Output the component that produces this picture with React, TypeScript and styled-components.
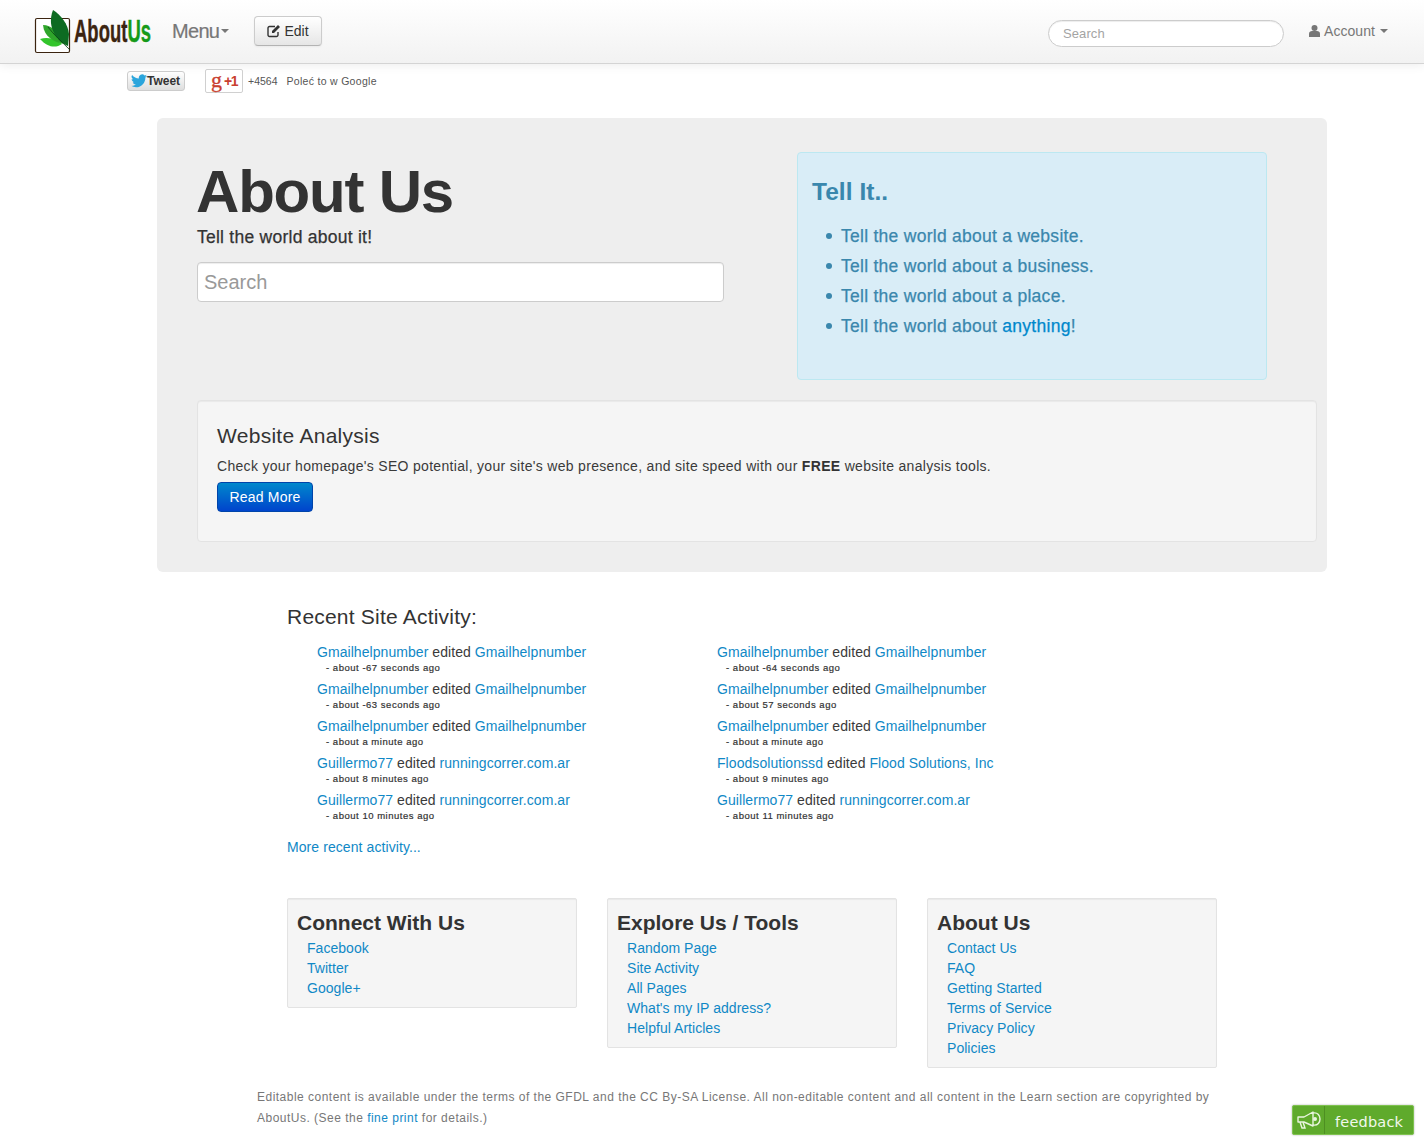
import React from "react";
import styled, { createGlobalStyle } from "styled-components";

const Global = createGlobalStyle`
  html, body { margin: 0; padding: 0; background: #fff; }
  body { font-family: "Liberation Sans", Arial, sans-serif; font-size: 14px; line-height: 20px; color: #3a3a3a; letter-spacing: .06px; }
  * { box-sizing: border-box; }
  a { color: #1088c6; text-decoration: none; }
`;

const Page = styled.div`width: 1424px; height: 1148px; position: relative; overflow: hidden;`;

const NavBar = styled.header`
  height: 64px; display: flex; align-items: flex-start;
  background: linear-gradient(#ffffff, #f2f2f2);
  border-bottom: 1px solid #d4d4d4;
  box-shadow: 0 1px 10px rgba(0,0,0,.08);
  padding-left: 34px;
`;
const LogoWrap = styled.a`display: block; width: 120px; height: 46px; margin-top: 8px;`;
const MenuLink = styled.a`
  margin: 18px 0 0 18px; font-size: 20px; line-height: 26px; color: #777; letter-spacing: -.7px;
  -webkit-text-stroke: .2px #777;
  display: flex; align-items: center; gap: 2px; width: 58px;
`;
const Caret = styled.span`
  display: inline-block; width: 0; height: 0;
  border-left: 4px solid transparent; border-right: 4px solid transparent; border-top: 4px solid #777;
`;
const AccountCaret = styled(Caret)`margin-left: 1px;`;
const EditButton = styled.button`
  margin: 16px 0 0 24px; width: 68px; height: 30px;
  font: 14px/20px "Liberation Sans", Arial, sans-serif; letter-spacing: 0; color: #333;
  background: linear-gradient(#ffffff, #e6e6e6);
  border: 1px solid #ccc; border-bottom-color: #b3b3b3; border-radius: 4px;
  box-shadow: inset 0 1px 0 rgba(255,255,255,.2), 0 1px 2px rgba(0,0,0,.05);
  display: flex; align-items: center; justify-content: center; gap: 3px; padding: 0;
`;
const NavSearch = styled.input`
  margin: 20px 0 0 726px; width: 236px; height: 27px; padding: 4px 14px;
  font: 13px/18px "Liberation Sans", Arial, sans-serif; letter-spacing: .1px;
  border: 1px solid #ccc; border-radius: 14px; background: #fff; outline: none;
  box-shadow: inset 0 1px 1px rgba(0,0,0,.075);
  &::placeholder { color: #a4a4a4; opacity: 1; }
`;
const AccountLink = styled.a`
  margin: 21px 0 0 25px; color: #777; font-size: 14px; line-height: 20px; letter-spacing: .06px;
  display: flex; align-items: center; gap: 4px;
`;

const SocialRow = styled.div`height: 54px; display: flex; align-items: flex-start; padding: 5px 0 0 127px;`;
const TweetBtn = styled.a`
  margin-top: 2px; width: 58px; height: 20px; border: 1px solid #ccc; border-radius: 3px;
  background: linear-gradient(#fff, #dedede); color: #333;
  font: bold 12px/18px "Liberation Sans", Arial, sans-serif; letter-spacing: 0;
  display: flex; align-items: center; padding-left: 3px; gap: 0;
`;
const PlusOne = styled.a`
  margin-left: 20px; width: 38px; height: 24px; border: 1px solid #d0d0d0; border-radius: 2px; background: #fff;
  display: flex; align-items: center; justify-content: center; gap: 2px; color: #c9402f; padding-bottom: 3px;
  font-family: "Liberation Serif", serif; font-size: 22px; font-weight: normal; letter-spacing: 0;
  -webkit-text-stroke: .3px #c9402f;
`;
const PlusText = styled.span`font: bold 14px/20px "Liberation Sans", Arial, sans-serif; letter-spacing: -1.5px; margin-top: 3px; -webkit-text-stroke: 0;`;
const SocialNote = styled.span`font-size: 10.5px; line-height: 24px; color: #555; letter-spacing: ${p => p.$ls}px; margin-left: ${p => p.$gap}px;`;

const Hero = styled.section`
  margin-left: 157px; width: 1170px; height: 454px; background: #eeeeee; border-radius: 6px;
  padding: 34px 10px 30px 40px;
`;
const HeroTop = styled.div`display: flex; align-items: flex-start; height: 249px; margin-bottom: -1px;`;
const HeroLeft = styled.div`width: 600px;`;
const HeroTitle = styled.h1`margin: 10px 0 0 -1px; font-size: 60px; line-height: 60px; font-weight: bold; color: #333; letter-spacing: -1.2px;`;
const HeroSub = styled.p`margin: 5px 0 0; font-size: 17.5px; line-height: 20px; color: #333; letter-spacing: .25px; -webkit-text-stroke: .25px #333;`;
const HeroSearch = styled.input`
  display: block; margin-top: 15px; width: 527px; height: 40px; padding: 4px 6px;
  font: 20px/30px "Liberation Sans", Arial, sans-serif; letter-spacing: 0;
  border: 1px solid #ccc; border-radius: 4px; background: #fff; outline: none;
  box-shadow: inset 0 1px 1px rgba(0,0,0,.075);
  &::placeholder { color: #999; opacity: 1; }
`;
const InfoBox = styled.div`
  width: 470px; height: 228px; background: #d9edf7; border: 1px solid #bce8f1; border-radius: 4px;
  padding: 24px 14px; color: #3a87ad;
`;
const InfoTitle = styled.h3`margin: 0 0 14px; font-size: 24.5px; line-height: 30px; font-weight: bold; color: #3a87ad; letter-spacing: .05px;`;
const InfoList = styled.ul`list-style: none; margin: 0; padding: 0 0 0 14px;`;
const InfoItem = styled.li`
  display: flex; align-items: center; gap: 9px;
  font-size: 17.5px; line-height: 30px; letter-spacing: .27px; -webkit-text-stroke: .25px #3a87ad;
  white-space: pre;
  &::before { content: ""; width: 6px; height: 6px; border-radius: 50%; background: #3a87ad; flex: none; }
`;
const InfoLink = styled.a`color: #0088cc; -webkit-text-stroke: .25px #0088cc;`;
const Strong = styled.strong`font-weight: bold; color: #333;`;

const Well = styled.div`
  width: 1120px; height: 142px; background: #f5f5f5; border: 1px solid #e3e3e3; border-radius: 4px;
  padding: 19px; box-shadow: inset 0 1px 1px rgba(0,0,0,.05);
`;
const WellTitle = styled.h4`margin: 1px 0 0; font-size: 21px; line-height: 30px; font-weight: normal; color: #333; letter-spacing: .28px;`;
const WellText = styled.p`margin: 5px 0 0; font-size: 14px; line-height: 20px; letter-spacing: .31px;`;
const PrimaryButton = styled.a`
  display: block; margin-top: 6px; width: 96px; height: 30px; text-align: center;
  line-height: 28px; font-size: 14px; color: #fff; letter-spacing: .2px;
  background: linear-gradient(#0088cc, #0044cc); border: 1px solid #0044aa; border-radius: 4px;
`;

const Activity = styled.section`margin: 30px 0 0 287px; width: 800px;`;
const ActivityTitle = styled.h4`margin: 0; font-size: 21px; line-height: 30px; font-weight: normal; letter-spacing: .21px; color: #333;`;
const ActivityGrid = styled.div`display: grid; grid-template-columns: 400px 400px; margin-top: 10px; padding-left: 30px;`;
const ActivityItem = styled.div`height: 37px; font-size: 14px; line-height: 20px; letter-spacing: .06px;`;
const Ago = styled.div`font-size: 9.5px; line-height: 12px; padding-left: 9px; letter-spacing: .52px; color: #333; -webkit-text-stroke: .2px #333;`;
const MoreLink = styled.a`display: block; margin-top: 10px; font-size: 14px; line-height: 20px; letter-spacing: .08px;`;

const FooterCols = styled.section`display: flex; align-items: flex-start; gap: 30px; margin: 41px 0 0 287px;`;
const FooterCard = styled.div`
  width: 290px; background: #f5f5f5; border: 1px solid #e3e3e3; border-radius: 2px;
  padding: 9px; box-shadow: inset 0 1px 1px rgba(0,0,0,.05);
`;
const FooterTitle = styled.h3`margin: 0; font-size: 21px; line-height: 30px; font-weight: bold; color: #333; letter-spacing: 0;`;
const FooterLinks = styled.ul`list-style: none; margin: 0; padding: 0 0 0 10px;`;
const FooterLink = styled.li`line-height: 20px; font-size: 14px; letter-spacing: .04px;`;

const Legal = styled.p`
  margin: 19px 0 0 257px; width: 970px; font-size: 12px; line-height: 21px; color: #777; letter-spacing: .485px;
`;
const FeedbackTab = styled.a`
  position: absolute; left: 1292px; top: 1105px; width: 122px; height: 30px;
  background: #5faa2c; border-radius: 2px; border: 1px solid #7fc24f;
  box-shadow: 0 0 2px rgba(0,0,0,.35);
  display: flex; align-items: center; color: #fff;
  font: 14.5px/30px "DejaVu Sans", sans-serif; letter-spacing: .2px;
`;
const FeedbackIcon = styled.span`
  width: 32px; height: 28px; border-right: 1px solid #4e8f22; display: flex; align-items: center; justify-content: center;
`;
const FeedbackLabel = styled.span`margin: 3px 0 0 10px; color: #f2f8ec;`;

const Logo = () => (
  <svg width="120" height="46" viewBox="0 0 120 46" aria-hidden="true">
    <rect x="1.500" y="10.500" width="34" height="34" rx="1.500" fill="#fff" stroke="#3b2410" strokeWidth="1.200" />
    <path d="M6 31 C12 29 18 30 24 33 L28 36 C22 40 14 40 6 31Z" fill="#33c52c" />
    <path d="M9 17 C17 17 25 24 30 36 C20 34 10 29 9 17Z" fill="#2fa52b" />
    <path d="M19 2 C27 7 34 16 35 26 L34 38 C24 34 12 20 19 2Z" fill="#0d6b22" />
    <path d="M14 19 C20 27 27 33 36 42" fill="none" stroke="#063d13" strokeWidth=".8" />
    <text x="40" y="34" fontFamily="'Liberation Sans Narrow','Liberation Sans',sans-serif" fontWeight="bold" fontSize="32" textLength="77" lengthAdjust="spacingAndGlyphs" fill="#3b2410" stroke="#3b2410" strokeWidth=".4">
      About<tspan fill="#159a19" stroke="#159a19">Us</tspan>
    </text>
  </svg>
);
const EditIcon = () => (
  <svg width="14" height="14" viewBox="0 0 14 14" aria-hidden="true">
    <path d="M11 8v3a1.500 1.500 0 0 1-1.500 1.500h-7A1.500 1.500 0 0 1 1 11V4a1.500 1.500 0 0 1 1.500-1.500H8" fill="none" stroke="#333" strokeWidth="1.400" />
    <path d="M5 7l6-6 2 2-6 6H5V7Z" fill="#333" />
  </svg>
);
const UserIcon = () => (
  <svg width="11" height="12" viewBox="0 0 11 12" aria-hidden="true">
    <circle cx="5.500" cy="3" r="3" fill="#777" />
    <path d="M0 12V8.500C0 7 1.500 6 3 6h5c1.500 0 3 1 3 2.500V12Z" fill="#777" />
  </svg>
);
const Bird = () => (
  <svg width="16" height="14" viewBox="0 0 24 20" aria-hidden="true">
    <path d="M24 2.400c-.9.4-1.800.7-2.800.8 1-.6 1.800-1.600 2.200-2.700-1 .6-2 1-3.100 1.200A4.900 4.900 0 0 0 11.900 6.200 14 14 0 0 1 1.700.900a4.900 4.900 0 0 0 1.500 6.600c-.8 0-1.600-.2-2.200-.6 0 2.400 1.700 4.400 3.900 4.900-.7.200-1.500.2-2.200.1.600 2 2.400 3.400 4.600 3.400A9.900 9.900 0 0 1 0 17.300 14 14 0 0 0 7.500 19.500c9.100 0 14.300-7.700 14-14.600 1-.7 1.800-1.600 2.500-2.500Z" fill="#2ba5dc" />
  </svg>
);
const Megaphone = () => (
  <svg width="26" height="20" viewBox="0 0 26 20" aria-hidden="true" fill="none" stroke="#e9f5de" strokeWidth="1.400">
    <path d="M2 7h6l9-5v14l-9-4H2Z" strokeLinejoin="round" />
    <path d="M4 12l2 6h3l-2-6" />
    <path d="M17 3c5-1 7 3 7 6s-2 7-7 6" />
    <circle cx="19" cy="9" r="2" fill="#e9f5de" stroke="none" />
  </svg>
);

const activity = [
  ["Gmailhelpnumber", "Gmailhelpnumber", "about -67 seconds ago"],
  ["Gmailhelpnumber", "Gmailhelpnumber", "about -64 seconds ago"],
  ["Gmailhelpnumber", "Gmailhelpnumber", "about -63 seconds ago"],
  ["Gmailhelpnumber", "Gmailhelpnumber", "about 57 seconds ago"],
  ["Gmailhelpnumber", "Gmailhelpnumber", "about a minute ago"],
  ["Gmailhelpnumber", "Gmailhelpnumber", "about a minute ago"],
  ["Guillermo77", "runningcorrer.com.ar", "about 8 minutes ago"],
  ["Floodsolutionssd", "Flood Solutions, Inc", "about 9 minutes ago"],
  ["Guillermo77", "runningcorrer.com.ar", "about 10 minutes ago"],
  ["Guillermo77", "runningcorrer.com.ar", "about 11 minutes ago"],
];
const cards = [
  ["Connect With Us", ["Facebook", "Twitter", "Google+"]],
  ["Explore Us / Tools", ["Random Page", "Site Activity", "All Pages", "What's my IP address?", "Helpful Articles"]],
  ["About Us", ["Contact Us", "FAQ", "Getting Started", "Terms of Service", "Privacy Policy", "Policies"]],
] as const;

export default function App() {
  return (
    <Page>
      <Global />
      <NavBar>
        <LogoWrap href="#"><Logo /></LogoWrap>
        <MenuLink href="#">Menu<Caret /></MenuLink>
        <EditButton><EditIcon />Edit</EditButton>
        <NavSearch placeholder="Search" />
        <AccountLink href="#"><UserIcon />Account<AccountCaret /></AccountLink>
      </NavBar>
      <SocialRow>
        <TweetBtn href="#"><Bird />Tweet</TweetBtn>
        <PlusOne href="#">g<PlusText>+1</PlusText></PlusOne>
        <SocialNote $gap={5} $ls={0}>+4564</SocialNote>
        <SocialNote $gap={9} $ls={0.3}>Poleć to w Google</SocialNote>
      </SocialRow>
      <Hero>
        <HeroTop>
          <HeroLeft>
            <HeroTitle>About Us</HeroTitle>
            <HeroSub>Tell the world about it!</HeroSub>
            <HeroSearch placeholder="Search" />
          </HeroLeft>
          <InfoBox>
            <InfoTitle>Tell It..</InfoTitle>
            <InfoList>
              <InfoItem>Tell the world about a website.</InfoItem>
              <InfoItem>Tell the world about a business.</InfoItem>
              <InfoItem>Tell the world about a place.</InfoItem>
              <InfoItem><span>Tell the world about <InfoLink href="#">anything</InfoLink>!</span></InfoItem>
            </InfoList>
          </InfoBox>
        </HeroTop>
        <Well>
          <WellTitle>Website Analysis</WellTitle>
          <WellText>Check your homepage's SEO potential, your site's web presence, and site speed with our <Strong>FREE</Strong> website analysis tools.</WellText>
          <PrimaryButton href="#">Read More</PrimaryButton>
        </Well>
      </Hero>
      <Activity>
        <ActivityTitle>Recent Site Activity:</ActivityTitle>
        <ActivityGrid>
          {activity.map(([who, what, when], i) => (
            <ActivityItem key={i}>
              <a href="#">{who}</a> edited <a href="#">{what}</a>
              <Ago>- {when}</Ago>
            </ActivityItem>
          ))}
        </ActivityGrid>
        <MoreLink href="#">More recent activity...</MoreLink>
      </Activity>
      <FooterCols>
        {cards.map(([title, links]) => (
          <FooterCard key={title}>
            <FooterTitle>{title}</FooterTitle>
            <FooterLinks>
              {links.map(l => <FooterLink key={l}><a href="#">{l}</a></FooterLink>)}
            </FooterLinks>
          </FooterCard>
        ))}
      </FooterCols>
      <Legal>Editable content is available under the terms of the GFDL and the CC By-SA License. All non-editable content and all content in the Learn section are copyrighted by AboutUs. (See the <a href="#">fine print</a> for details.)</Legal>
      <FeedbackTab href="#">
        <FeedbackIcon><Megaphone /></FeedbackIcon>
        <FeedbackLabel>feedback</FeedbackLabel>
      </FeedbackTab>
    </Page>
  );
}
